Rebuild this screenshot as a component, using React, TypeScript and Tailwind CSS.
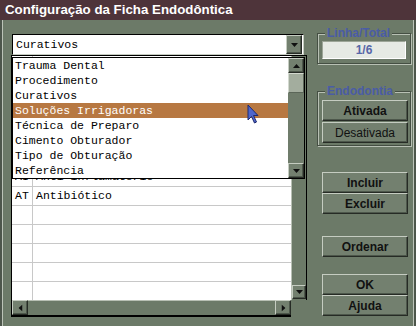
import type { ReactNode } from 'react'

const listItems = [
  'Trauma Dental',
  'Procedimento',
  'Curativos',
  'Soluções Irrigadoras',
  'Técnica de Preparo',
  'Cimento Obturador',
  'Tipo de Obturação',
  'Referência',
]

// rows hidden under the open list are left blank
const gridRows: [string, string][] = [
  ['', ''],
  ['', ''],
  ['', ''],
  ['', ''],
  ['', ''],
  ['', ''],
  ['AI', 'Anti-inflamatório'],
  ['AT', 'Antibiótico'],
  ['', ''],
  ['', ''],
  ['', ''],
  ['', ''],
  ['', ''],
]

const face =
  'bg-[#73806f] border border-t-[#c5ccc1] border-l-[#c5ccc1] border-b-[#262b25] border-r-[#262b25]'

const triClass = {
  up: '',
  down: 'rotate-180',
  left: '-rotate-90',
  right: 'rotate-90',
}

function ArrowButton({ dir, className = '' }: { dir: 'up' | 'down' | 'left' | 'right'; className?: string }) {
  return (
    <div className={`${face} flex items-center justify-center shadow-[inset_-1px_-1px_0_#4d574b] ${className}`}>
      <svg width="7" height="4" viewBox="0 0 7 4" className={triClass[dir]}>
        <path d="M0 4 L3.5 0 L7 4 Z" fill="#101010" />
      </svg>
    </div>
  )
}

function Button({ children, bold = true, className = '' }: { children: ReactNode; bold?: boolean; className?: string }) {
  return (
    <button
      type="button"
      className={`${face} h-[21px] w-[86px] shadow-[inset_-1px_-1px_0_#4d574b] text-[12px] leading-none text-[#111] ${
        bold ? 'font-bold' : 'font-normal'
      } ${className}`}
    >
      {children}
    </button>
  )
}

function Cursor() {
  return (
    <svg width="13" height="21" viewBox="0 0 13 21" className="absolute left-[247px] top-[104px]">
      <path
        d="M1 1 L1 16 L4.5 12.5 L7.5 19 L9.5 18 L6.5 11.5 L11 11.5 Z"
        fill="#4f66cc"
        stroke="#1f2a6e"
        strokeWidth="1"
        strokeLinejoin="round"
      />
    </svg>
  )
}

function DropdownList() {
  return (
    <div className="absolute left-[12px] top-[57px] flex h-[122px] w-[293px] border border-black bg-white">
      <div className="flex-1 font-['Liberation_Mono','Courier_New',monospace] text-[11.5px]">
        {listItems.map((item, i) => (
          <div
            key={item}
            className={`flex h-[15px] items-center pl-[2px] leading-none ${
              i === 3 ? 'bg-[#b77842] text-white' : 'text-black'
            }`}
          >
            {item}
          </div>
        ))}
      </div>
      <div className="flex w-[16px] flex-col bg-[#6f7c6b]">
        <ArrowButton dir="up" className="h-[15px]" />
        <div className="h-[20px] border border-t-[#d3d9cf] border-l-[#d3d9cf] border-b-[#5b6658] border-r-[#5b6658] bg-[#a3ad9e]" />
        <div className="flex-1" />
        <ArrowButton dir="down" className="h-[15px]" />
      </div>
    </div>
  )
}

function Grid() {
  return (
    <div className="flex h-[262px] w-[296px] flex-col">
      <div className="flex h-[245px] border-t border-black">
        <div className="flex-1 overflow-hidden border-l border-black bg-white font-['Liberation_Mono','Courier_New',monospace] text-[11.5px] text-black">
          {gridRows.map(([code, name], i) => (
            <div
              key={i}
              className={`flex border-b border-[#c8c8c8] ${i === 0 ? 'h-[17px]' : 'h-[19px]'}`}
            >
              <div className="flex w-[21px] items-center border-r border-[#c8c8c8] pl-[3px]">{code}</div>
              <div className="flex items-center pl-[3px]">{name}</div>
            </div>
          ))}
        </div>
        <div className="flex w-[16px] flex-col justify-end border-l border-r border-l-[#b8c0b4] border-r-black bg-[#6c7a68] pb-[1px]">
          <ArrowButton dir="down" className="h-[14px]" />
        </div>
      </div>
      <div className="flex h-[16px]">
        <div className="flex flex-1 border-l border-b border-black bg-[#6c7a68] shadow-[inset_0_1px_0_#b8c0b4]">
          <ArrowButton dir="left" className="w-[16px]" />
          <div className="flex-1" />
          <ArrowButton dir="right" className="w-[16px]" />
        </div>
        <div className="w-[16px]" />
      </div>
      <div className="h-px w-[280px] bg-black" />
    </div>
  )
}

function GroupBox({ label, children, className = '' }: { label: string; children: ReactNode; className?: string }) {
  return (
    <fieldset
      className={`w-[94px] border border-[#454f43] pl-[4px] shadow-[inset_1px_1px_0_#b8c0b4,1px_1px_0_#b8c0b4] ${className}`}
    >
      <legend className="ml-[3px] bg-[#6c7a68] px-[2px] text-[12px] font-bold leading-[14px] text-[#4a5ca6]">
        {label}
      </legend>
      {children}
    </fieldset>
  )
}

export default function App() {
  return (
    <div className="relative flex h-[326px] w-[416px] flex-col overflow-hidden bg-[#6c7a68] font-['Liberation_Sans',Arial,sans-serif] shadow-[inset_2px_0_0_#4d564b,inset_3px_0_0_#bcc3b8,inset_-2px_0_0_#4d564b,inset_-3px_0_0_#bcc3b8]">
      <div className="h-[20px] shrink-0 bg-[#4e343a] pl-[5px] text-[13.3px] font-bold leading-[20px] text-white">
        Configuração da Ficha Endodôntica
      </div>

      <div className="flex flex-1 pl-[11px]">
        <div className="mt-[14px] flex w-[296px] flex-col">
          <div className="ml-px flex h-[21px] w-[292px] items-center border border-t-black border-l-black border-b-[#c5ccc1] border-r-[#c5ccc1] bg-white">
            <span className="flex-1 pl-[3px] font-['Liberation_Mono','Courier_New',monospace] text-[11.5px] text-black">
              Curativos
            </span>
            <ArrowButton dir="down" className="mr-px h-[19px] w-[16px]" />
          </div>
          <Grid />
        </div>

        <div className="ml-[10px] mt-[6px] flex w-[94px] flex-col">
          <GroupBox label="Linha/Total" className="pb-[4px]">
            <div className="mt-px flex h-[18px] w-[84px] items-center justify-center border border-t-[#9ca597] border-l-[#9ca597] border-b-white border-r-white bg-[#e6eae4] text-[12px] font-bold text-[#5667a8]">
              1/6
            </div>
          </GroupBox>

          <GroupBox label="Endodontia" className="mt-[20px] pb-[2px]">
            <div className="mt-[2px] flex flex-col gap-px">
              <Button>Ativada</Button>
              <Button bold={false}>Desativada</Button>
            </div>
          </GroupBox>

          <div className="ml-[5px] flex flex-col">
            <Button className="mt-[26px]">Incluir</Button>
            <Button>Excluir</Button>
            <Button className="mt-[22px]">Ordenar</Button>
            <Button className="mt-[17px]">OK</Button>
            <Button>Ajuda</Button>
          </div>
        </div>
      </div>

      <DropdownList />
      <Cursor />
    </div>
  )
}
